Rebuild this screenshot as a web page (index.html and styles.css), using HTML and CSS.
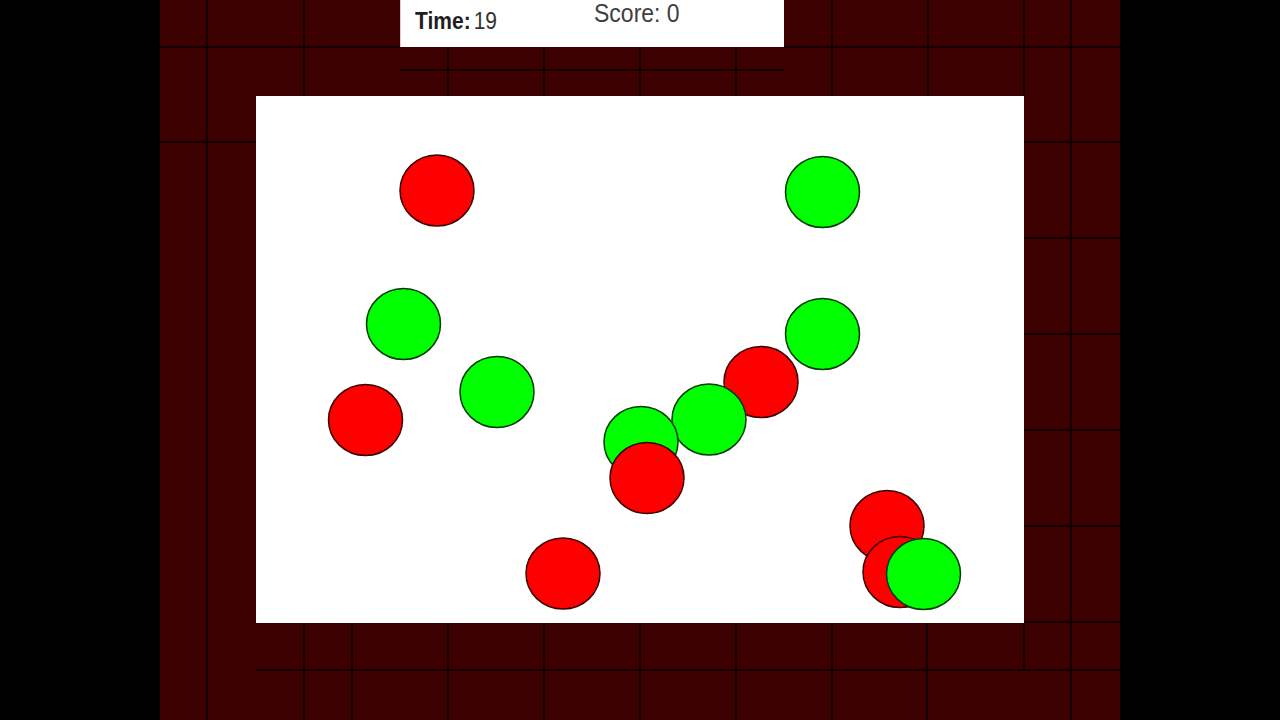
FILE: index.html
```html
<!DOCTYPE html>
<html>
<head>
<meta charset="utf-8">
<link rel="stylesheet" href="styles.css">
</head>
<body>
<div class="stage">
  <svg class="grid" width="960" height="720" viewBox="0 0 960 720">
    <g class="lines">
      <line x1="47" y1="0" x2="47" y2="720"/>
      <line x1="911" y1="0" x2="911" y2="720"/>
      <line x1="144" y1="0" x2="144" y2="96"/>
      <line x1="288" y1="47" x2="288" y2="96"/>
      <line x1="384" y1="47" x2="384" y2="96"/>
      <line x1="480" y1="47" x2="480" y2="96"/>
      <line x1="576" y1="47" x2="576" y2="96"/>
      <line x1="672" y1="0" x2="672" y2="96"/>
      <line x1="768" y1="0" x2="768" y2="96"/>
      <line x1="864" y1="0" x2="864" y2="96"/>
      <line x1="144" y1="623" x2="144" y2="720"/>
      <line x1="192" y1="623" x2="192" y2="720"/>
      <line x1="288" y1="623" x2="288" y2="720"/>
      <line x1="384" y1="623" x2="384" y2="720"/>
      <line x1="480" y1="623" x2="480" y2="720"/>
      <line x1="576" y1="623" x2="576" y2="720"/>
      <line x1="672" y1="623" x2="672" y2="720"/>
      <line x1="767" y1="623" x2="767" y2="720"/>
      <line x1="864" y1="623" x2="864" y2="670"/>
      <line x1="0" y1="47" x2="240" y2="47"/>
      <line x1="624" y1="47" x2="960" y2="47"/>
      <line x1="240" y1="70" x2="624" y2="70"/>
      <line x1="0" y1="142" x2="96" y2="142"/>
      <line x1="864" y1="142" x2="960" y2="142"/>
      <line x1="864" y1="238" x2="960" y2="238"/>
      <line x1="864" y1="334" x2="960" y2="334"/>
      <line x1="864" y1="430" x2="960" y2="430"/>
      <line x1="864" y1="526" x2="960" y2="526"/>
      <line x1="864" y1="622" x2="960" y2="622"/>
      <line x1="96" y1="670" x2="960" y2="670"/>
    </g>
  </svg>
  <div class="hud">
    <div class="time"><span class="label">Time:</span><span class="value">19</span></div>
    <div class="score">Score: 0</div>
  </div>
  <div class="field">
    <svg class="balls" width="768" height="527" viewBox="0 0 768 527">
      <ellipse class="red" cx="181" cy="94.5" rx="37" ry="35.5"/>
      <ellipse class="green" cx="566.5" cy="96" rx="37" ry="35.5"/>
      <ellipse class="green" cx="147.5" cy="228" rx="37" ry="35.5"/>
      <ellipse class="green" cx="566.5" cy="238" rx="37" ry="35.5"/>
      <ellipse class="red" cx="505" cy="286" rx="37" ry="35.5"/>
      <ellipse class="green" cx="453" cy="323.5" rx="37" ry="35.5"/>
      <ellipse class="green" cx="241" cy="296" rx="37" ry="35.5"/>
      <ellipse class="red" cx="109.5" cy="324" rx="37" ry="35.5"/>
      <ellipse class="green" cx="385" cy="346" rx="37" ry="35.5"/>
      <ellipse class="red" cx="391" cy="382" rx="37" ry="35.5"/>
      <ellipse class="red" cx="631" cy="430" rx="37" ry="35.5"/>
      <ellipse class="red" cx="644" cy="476" rx="37" ry="35.5"/>
      <ellipse class="green" cx="667.5" cy="478" rx="37" ry="35.5"/>
      <ellipse class="red" cx="307" cy="477.5" rx="37" ry="35.5"/>
    </svg>
  </div>
</div>
</body>
</html>
```

FILE: styles.css
```css
html, body {
  margin: 0;
  padding: 0;
  background: #000;
  width: 1280px;
  height: 720px;
  overflow: hidden;
}

.stage {
  position: relative;
  width: 960px;
  height: 720px;
  margin: 0 auto;
  background: #3c0000;
  display: flex;
  flex-direction: column;
  align-items: flex-start;
}

.grid {
  position: absolute;
  left: 0;
  top: 0;
  display: block;
}

.lines line {
  stroke: #140000;
  stroke-width: 2;
}

.hud {
  position: relative;
  margin-left: 240px;
  width: 384px;
  height: 47px;
  background: #fff;
  box-shadow: inset 1px 0 0 #e8c8c8;
  display: flex;
  align-items: flex-start;
  font-family: "Liberation Sans", Arial, sans-serif;
  line-height: 1;
}

.time {
  margin-left: 15px;
  margin-top: 11px;
  display: flex;
  align-items: baseline;
  color: #1e1e1e;
  transform: scaleY(1.15);
  transform-origin: 0 85%;
}

.time .label {
  font-size: 21px;
  font-weight: bold;
}

.time .value {
  font-size: 21px;
  margin-left: 3px;
  color: #333;
}

.score {
  margin-left: 97px;
  margin-top: 3px;
  font-size: 23px;
  color: #404040;
  transform: scaleY(1.12);
  transform-origin: 0 85%;
}

.field {
  position: relative;
  margin-top: 49px;
  margin-left: 96px;
  width: 768px;
  height: 527px;
  background: #fff;
}

.balls {
  display: block;
}

.balls ellipse {
  stroke-width: 1.5;
}

.balls .red {
  fill: #ff0000;
  stroke: #3a0000;
}

.balls .green {
  fill: #00ff00;
  stroke: #003a00;
}
```
